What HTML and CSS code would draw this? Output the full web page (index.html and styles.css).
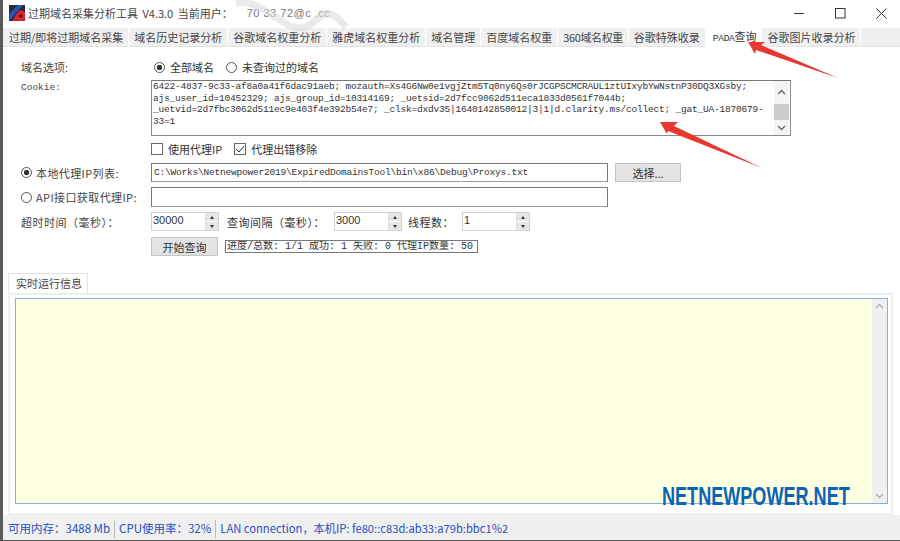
FILE: index.html
```html
<!DOCTYPE html>
<html>

<head lang="zh">
    <meta charset="UTF-8">
    <title>过期域名采集分析工具</title>
    <link rel="stylesheet" href="styles.css">
</head>

<body>
    <div class="window">
        <div class="titlebar">
            <svg class="app-icon" width="16" height="16" viewBox="0 0 16 16">
                <rect width="16" height="16" fill="#2a2a3a"/>
                <path d="M0 16 L0 9 L9 0 L14 0 Z" fill="#2456b8"/>
                <path d="M3 16 L8 8 L11 5 L16 7 L16 16 Z" fill="#d8232a"/>
                <path d="M9 11 L13 9 L13 13 Z" fill="#3a1a1a"/>
            </svg>
            <span class="title-text">过期域名采集分析工具 V4.3.0 当前用户：</span>
            <span class="title-user">70 33 72@c .cc</span>
            <div class="win-buttons">
                <svg width="11" height="11" viewBox="0 0 11 11"><path d="M0 5.5H10" stroke="#333" fill="none"/></svg>
                <svg width="11" height="11" viewBox="0 0 11 11"><rect x="0.5" y="0.5" width="9.5" height="9.5" stroke="#333" fill="none"/></svg>
                <svg width="11" height="11" viewBox="0 0 11 11"><path d="M0.5 0.5L10.5 10.5M10.5 0.5L0.5 10.5" stroke="#333" fill="none"/></svg>
            </div>
        </div>

        <div class="tabs">
            <span class="tab">过期/即将过期域名采集</span>
            <span class="tab">域名历史记录分析</span>
            <span class="tab">谷歌域名权重分析</span>
            <span class="tab">雅虎域名权重分析</span>
            <span class="tab">域名管理</span>
            <span class="tab">百度域名权重</span>
            <span class="tab tab-360">360域名权重</span>
            <span class="tab">谷歌特殊收录</span>
            <span class="tab active"><span class="tab-mono">PADA</span>查询</span>
            <span class="tab">谷歌图片收录分析</span>
        </div>

        <div class="form">
            <div class="row row-options">
                <span class="label">域名选项:</span>
                <span class="radio checked"></span><span class="opt opt-all">全部域名</span>
                <span class="radio"></span><span class="opt">未查询过的域名</span>
            </div>

            <div class="row row-cookie">
                <span class="label mono">Cookie:</span>
                <div class="cookie-box">
                    <div class="cookie-text">6422-4837-9c33-af8a0a41f6dac91aeb; mozauth=Xs4G6Nw0e1vgjZtm5Tq0ny6Qs0rJCGPSCMCRAUL1ztUIxybYwNstnP30DQ3XGsby;<br>ajs_user_id=10452329; ajs_group_id=10314169; _uetsid=2d7fcc9062d511eca1833d0561f7044b;<br>_uetvid=2d7fbc3062d511ec9e403f4e392b54e7; _clsk=dxdv35|1640142850012|3|1|d.clarity.ms/collect; _gat_UA-1870679-<br>33=1</div>
                    <div class="cookie-scroll">
                        <svg class="chev" width="15" height="23" viewBox="0 0 15 23"><path d="M4 13L7.5 9.5L11 13" stroke="#666" stroke-width="1.3" fill="none"/></svg>
                        <span class="thumb"></span>
                        <svg class="chev" width="15" height="15" viewBox="0 0 15 15"><path d="M4 6L7.5 9.5L11 6" stroke="#666" stroke-width="1.3" fill="none"/></svg>
                    </div>
                </div>
            </div>

            <div class="row row-checks">
                <span class="check"></span><span class="opt opt-proxy">使用代理IP</span>
                <span class="check checked">
                    <svg width="10" height="10" viewBox="0 0 10 10"><path d="M1 5L4 8L9 2" stroke="#333" fill="none"/></svg>
                </span><span class="opt">代理出错移除</span>
            </div>

            <div class="row row-local">
                <span class="label label-radio"><span class="radio checked"></span>本地代理IP列表:</span>
                <div class="input wide mono-input">C:\Works\Netnewpower2019\ExpiredDomainsTool\bin\x86\Debug\Proxys.txt</div>
                <button class="btn btn-choose">选择...</button>
            </div>

            <div class="row row-api">
                <span class="label label-radio"><span class="radio"></span>API接口获取代理IP:</span>
                <div class="input wide"></div>
            </div>

            <div class="row row-spin">
                <span class="label label-spaced">超时时间（毫秒）：</span>
                <div class="spin"><span class="spin-val">30000</span><span class="spin-btn"><i class="up"></i><i class="dn"></i></span></div>
                <span class="spin-label sl-gap">查询间隔（毫秒）：</span>
                <div class="spin"><span class="spin-val">3000</span><span class="spin-btn"><i class="up"></i><i class="dn"></i></span></div>
                <span class="spin-label sl-threads">线程数：</span>
                <div class="spin"><span class="spin-val">1</span><span class="spin-btn"><i class="up"></i><i class="dn"></i></span></div>
            </div>

            <div class="row row-start">
                <span class="label"></span>
                <button class="btn btn-start">开始查询</button>
                <span class="progress">进度/总数: 1/1 成功: 1 失败: 0 代理IP数量: 50</span>
            </div>
        </div>

        <div class="log-tabs"><span class="log-tab">实时运行信息</span></div>
        <div class="log-panel">
            <div class="log-box">
                <div class="log-scroll">
                    <svg class="chev" width="15" height="15" viewBox="0 0 15 15"><path d="M4 9L7.5 5.5L11 9" stroke="#aaa" stroke-width="1.3" fill="none"/></svg>
                    <svg class="chev" width="15" height="15" viewBox="0 0 15 15"><path d="M4 6L7.5 9.5L11 6" stroke="#aaa" stroke-width="1.3" fill="none"/></svg>
                </div>
            </div>
        </div>

        <div class="statusbar">
            <span class="status-item">可用内存：3488 Mb</span>
            <span class="status-item">CPU使用率：32%</span>
            <span class="status-item">LAN connection，本机IP: fe80::c83d:ab33:a79b:bbc1%2</span>
        </div>
    </div>

    <!-- things pasted on top of the screenshot -->
    <svg class="overlay" width="900" height="541" viewBox="0 0 900 541">
        <path d="M236 3 C250 0 262 8 280 20 C294 30 305 32 318 18 C326 10 334 12 346 27" stroke="#dcdcdc" stroke-width="7" fill="none" opacity="0.6"/>
        <polygon points="748,42 765,42 761,45 838,78 756,50 755,54" fill="#e8372f"/>
        <polygon points="660,122 678,122 674,126 762,168 668,131 667,134" fill="#e8372f"/>
    </svg>
    <div class="brand">NETNEWPOWER.NET</div>
</body>

</html>
```

FILE: styles.css
```css
* {
    box-sizing: border-box;
}

html,
body {
    margin: 0;
    height: 541px;
    overflow: hidden;
}

body {
    position: relative;
    background-color: #fff;
    font-family: "Noto Sans CJK SC", "Noto Sans", sans-serif;
    font-size: 11px;
    color: #333;
}

.window {
    height: 541px;
    display: flex;
    flex-direction: column;
    border-left: 3px solid #5a5a5a;
    border-bottom: 1px solid #555;
}

/* title bar */
.titlebar {
    height: 28px;
    flex: none;
    display: flex;
    align-items: center;
    padding-left: 6px;
    padding-bottom: 2px;
    background-color: #fff;
}

.app-icon {
    margin-right: 3px;
}

.title-text {
    font-size: 11px;
    word-spacing: 2px;
    color: #444;
}

.title-user {
    margin-left: 14px;
    font-family: "Liberation Sans", sans-serif;
    font-size: 11px;
    letter-spacing: 0.5px;
    color: #777;
}

.win-buttons {
    margin-left: auto;
    display: flex;
    gap: 30px;
    padding-right: 13px;
}

/* main tabs */
.tabs {
    height: 19px;
    flex: none;
    display: flex;
    padding-left: 1px;
    background-color: #f0f0f0;
    border-bottom: 1px solid #e4e4e4;
}

.tab {
    padding: 0 5px;
    line-height: 18px;
    border-right: 1px solid #fff;
    white-space: nowrap;
    color: #444;
}

.tab-360 {
    letter-spacing: -0.4px;
}

.tab.active {
    margin: -1px 0 -1px 0;
    padding: 0 5px 0 7px;
    line-height: 19px;
    height: 20px;
    background-color: #fff;
    color: #333;
}

.tab-mono {
    font-family: "Liberation Mono", monospace;
    font-size: 9.5px;
    letter-spacing: -0.3px;
}

/* form */
.form {
    height: 226px;
    flex: none;
    padding-top: 12px;
    padding-left: 18px;
    display: flex;
    flex-direction: column;
    background-color: #fff;
}

.row {
    display: flex;
    align-items: center;
}

.label {
    width: 130px;
    flex: none;
    color: #444;
}

.label-spaced {
    letter-spacing: 0.5px;
}

.mono {
    font-family: "Liberation Mono", monospace;
    font-size: 9.5px;
}

.label-radio {
    display: flex;
    align-items: center;
    font-size: 11px;
    letter-spacing: 0.4px;
}

.label-radio .radio {
    margin: 0 4px 0 0;
}

.row-options {
    height: 16px;
}

.row-cookie {
    align-items: flex-start;
    margin-top: 5px;
}

.row-cookie .label {
    padding-top: 2px;
}

.radio {
    width: 11px;
    height: 11px;
    margin-left: 3px;
    flex: none;
    border: 1px solid #555;
    border-radius: 50%;
    background-color: #fff;
}

.radio.checked {
    background: radial-gradient(circle, #333 0, #333 2.5px, #fff 3px);
}

.opt {
    margin-left: 5px;
}

.opt-all {
    margin-right: 9px;
}

.cookie-box {
    width: 640px;
    height: 56px;
    display: flex;
    border: 1px solid #8a8a8a;
    border-top-color: #777;
}

.cookie-text {
    flex: 1;
    min-width: 0;
    padding: 0 0 0 1px;
    font-family: "Liberation Mono", monospace;
    font-size: 9.5px;
    letter-spacing: -0.2px;
    line-height: 11.6px;
    white-space: nowrap;
    color: #333;
}

.cookie-scroll {
    width: 15px;
    margin-right: 1px;
    flex: none;
    display: flex;
    flex-direction: column;
    background-color: #f4f4f4;
}

.chev {
    display: block;
    flex: none;
}

.thumb {
    display: block;
    height: 16px;
    flex: none;
    background-color: #cdcdcd;
}

.row-checks {
    margin-top: 5px;
    height: 15px;
    padding-left: 130px;
}

.check {
    width: 12px;
    height: 12px;
    flex: none;
    display: flex;
    align-items: center;
    justify-content: center;
    border: 1px solid #666;
}

.opt-proxy {
    margin-right: 12px;
}

.input {
    height: 19px;
    border: 1px solid #777;
    border-bottom-color: #999;
    background-color: #fff;
}

.wide {
    width: 457px;
}

.mono-input {
    padding-left: 2px;
    font-family: "Liberation Mono", monospace;
    font-size: 9.5px;
    letter-spacing: -0.2px;
    line-height: 17px;
    color: #333;
    white-space: nowrap;
}

.btn {
    padding: 0;
    height: 19px;
    border: 1px solid #c4c4c4;
    background-color: #e3e3e3;
    font-family: inherit;
    font-size: 11px;
    line-height: 16px;
    color: #333;
}

.btn-choose {
    width: 66px;
    margin-left: 7px;
}

.row-local {
    margin-top: 7px;
}

.row-api {
    margin-top: 5px;
}

.row-api .input {
    height: 20px;
}

.row-spin {
    margin-top: 5px;
}

.spin {
    width: 68px;
    height: 19px;
    flex: none;
    display: flex;
    justify-content: space-between;
    border: 1px solid #d0d0d0;
    background-color: #fff;
}

.spin-val {
    padding-left: 1px;
    font-family: "Liberation Sans", sans-serif;
    font-size: 11px;
    line-height: 15px;
    color: #333;
}

.spin-btn {
    width: 13px;
    display: flex;
    flex-direction: column;
    gap: 1px;
    border-left: 1px solid #ddd;
}

.spin-btn i {
    flex: 1;
    background-color: #e6e6e6;
    position: relative;
}

.spin-btn i:after {
    content: "";
    position: absolute;
    left: 4px;
    top: 3px;
    border-left: 2.5px solid transparent;
    border-right: 2.5px solid transparent;
}

.spin-btn .up:after {
    border-bottom: 3px solid #333;
}

.spin-btn .dn:after {
    border-top: 3px solid #333;
}

.spin-label {
    flex: none;
    letter-spacing: 0.5px;
}

.sl-gap {
    width: 115px;
    padding-left: 8px;
}

.sl-threads {
    width: 60px;
    padding-left: 6px;
}

.row-start {
    margin-top: 6px;
}

.btn-start {
    width: 67px;
}

.progress {
    margin-left: 7px;
    width: 253px;
    height: 13px;
    padding-left: 1px;
    border: 1px solid #777;
    font-family: "Liberation Mono", "Noto Sans CJK SC", monospace;
    font-size: 10px;
    line-height: 11px;
    white-space: nowrap;
    overflow: hidden;
}

/* log panel */
.log-tabs {
    flex: none;
    height: 20px;
    padding-left: 5px;
    background-color: #fff;
}

.log-tab {
    display: block;
    width: 80px;
    height: 20px;
    padding-left: 7px;
    border: 1px solid #e2e2e2;
    border-bottom: none;
    line-height: 19px;
    color: #444;
}

.log-panel {
    flex: none;
    height: 222px;
    margin-left: 5px;
    margin-right: 7px;
    padding: 3px 3px 9px 5px;
    border: 2px solid #eee;
    background-color: #fff;
}

.log-box {
    height: 100%;
    display: flex;
    justify-content: flex-end;
    border: 1px solid #7fb2e0;
    background-color: #ffffe1;
}

.log-scroll {
    width: 15px;
    display: flex;
    flex-direction: column;
    justify-content: space-between;
    background-color: #f0f0f0;
}

.statusbar {
    flex: 1;
    display: flex;
    align-items: flex-end;
    padding: 0 0 2px 1px;
    background-color: #f0f0f0;
    color: #2a4fc0;
    font-size: 11.5px;
}

.status-item {
    height: 18px;
    padding: 0 4px;
    line-height: 17px;
    border-right: 1px solid #bbb;
    white-space: nowrap;
}

.status-item:last-child {
    border-right: none;
    font-size: 11.2px;
}

/* overlays */
.overlay {
    position: absolute;
    top: 0;
    left: 0;
    pointer-events: none;
}

.brand {
    position: absolute;
    left: 662px;
    top: 482px;
    width: 272px;
    transform: scaleX(0.695);
    transform-origin: left top;
    font-family: "Liberation Sans", sans-serif;
    font-weight: bold;
    font-size: 26px;
    line-height: 28px;
    color: #0b63b8;
    white-space: nowrap;
}
```
